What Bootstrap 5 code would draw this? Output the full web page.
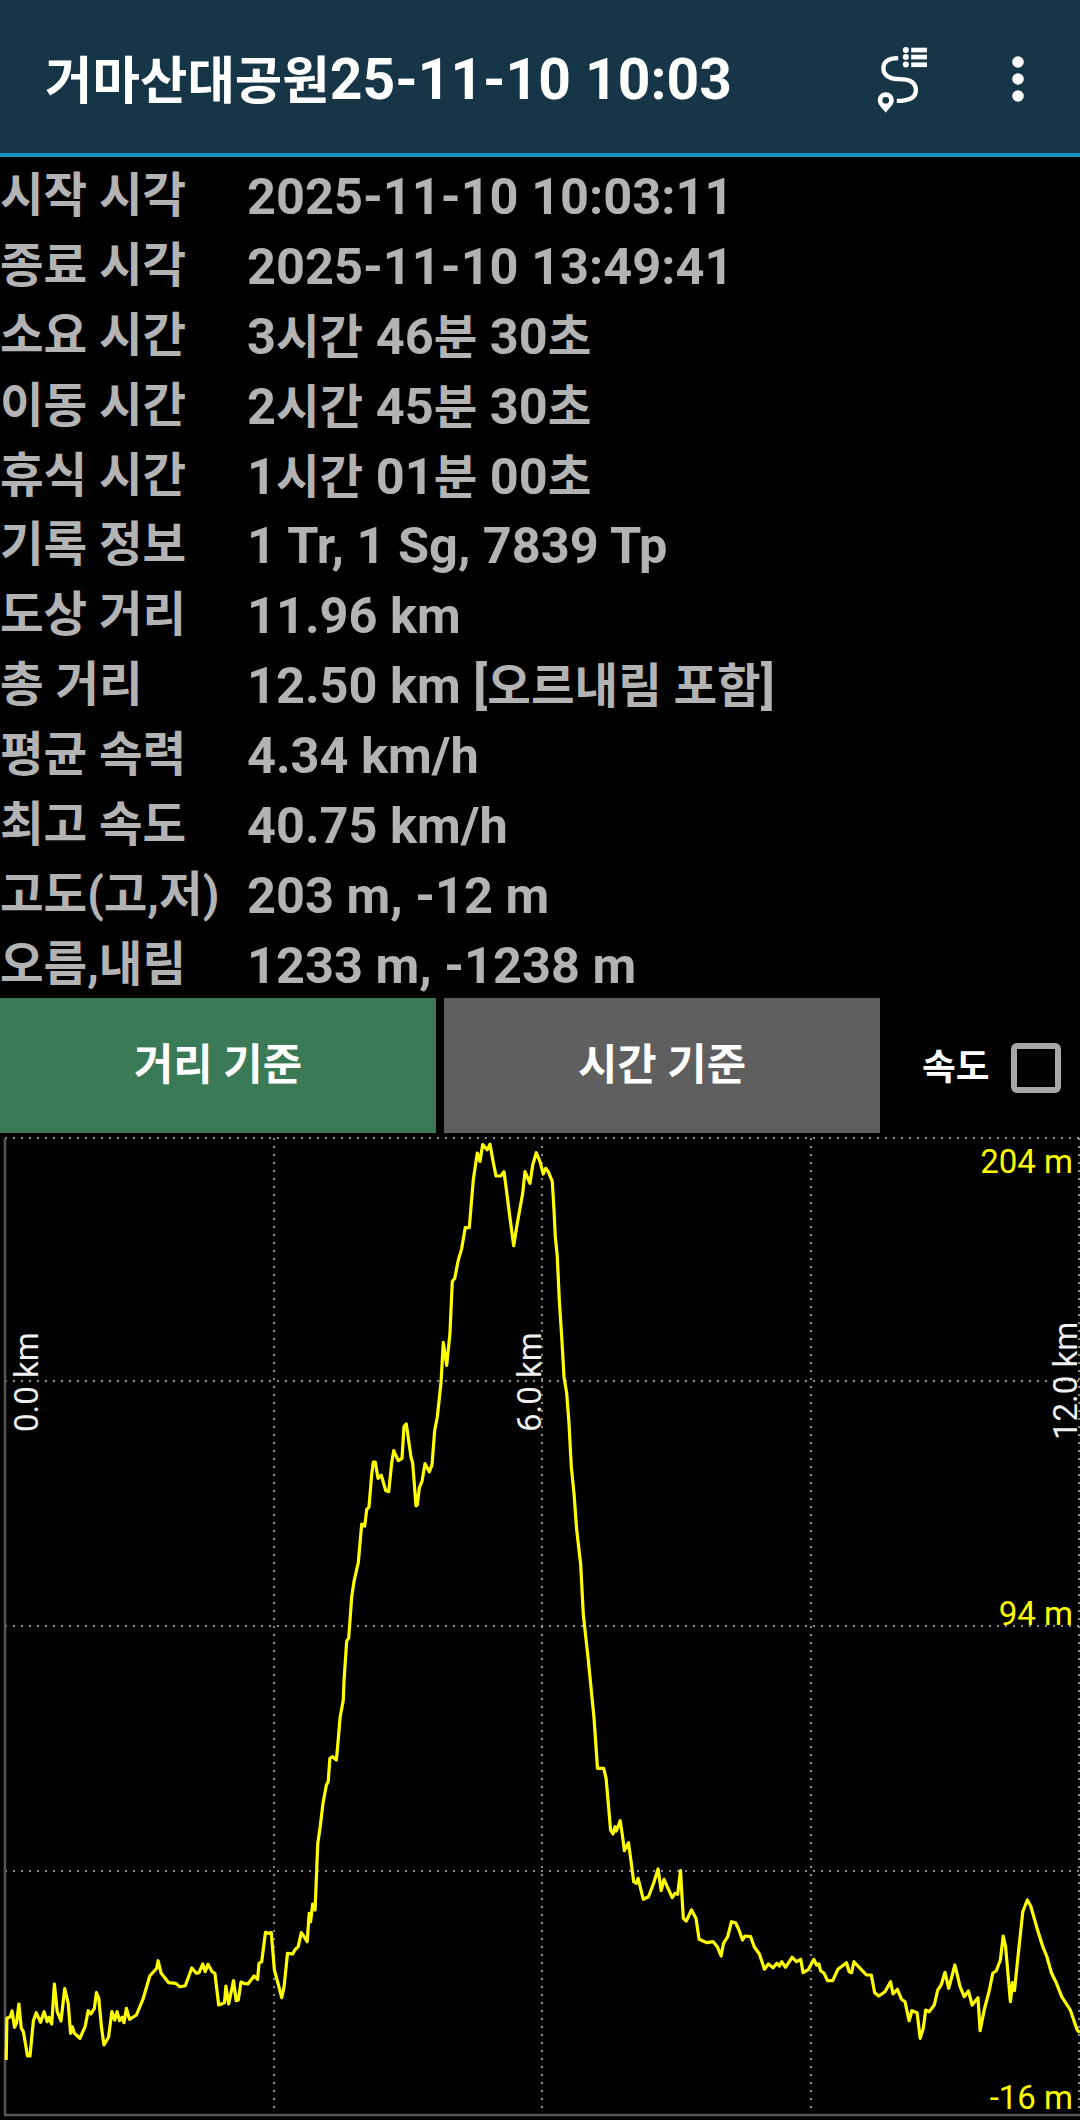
<!DOCTYPE html>
<html lang="ko">
<head>
  <meta charset="UTF-8" />
  <meta name="viewport" content="width=device-width, initial-scale=1.0"/>
  <title>거마산대공원25-11-10 10:03</title>
  <link href="https://cdn.jsdelivr.net/npm/bootstrap@5.3.2/dist/css/bootstrap.min.css" rel="stylesheet" />
  <style>
    body {
      background: #000;
      font-family: Roboto, "Noto Sans CJK KR", sans-serif;
      margin: 0;
    }
    .app-bar {
      height: 157px;
      padding: 6px 0 0 45px;
      background: #163547;
      border-bottom: 4px solid #1a8fc2;
    }
    .app-title {
      color: #fff;
      font-size: 57px;
      font-weight: 700;
      white-space: nowrap;
    }
    .app-title .han { font-size: 51.6px; }
    .route-icon { width: 57px; height: 72px; margin-right: 75px; }
    .more-icon { width: 24px; height: 60px; margin-right: 50px; }
    .stat-list { height: 841px; padding-top: 5px; }
    .stat-row {
      height: 69.9px;
      line-height: 69.9px;
      color: #b3b3b3;
      font-size: 50.5px;
      font-weight: 700;
      white-space: nowrap;
    }
    .stat-label { width: 247px; font-size: 47.4px; }
    .han { font-size: 47.4px; }
    .mode-btn {
      width: 436px;
      height: 135px;
      border: 0;
      border-radius: 0;
      color: #fff;
      font-size: 42.8px;
      font-weight: 700;
    }
    .mode-btn:hover, .mode-btn:active { color: #fff; }
    .mode-dist, .mode-dist:hover { background: #3b7a57; }
    .mode-time, .mode-time:hover { background: #5f5f5f; }
    .speed-label { color: #fff; font-size: 36.7px; font-weight: 700; margin-left: 42px; }
    .speed-box {
      width: 50px;
      height: 50px;
      margin-left: 21px;
      border: 6px solid #a8a8a8;
      border-radius: 6px;
    }
    .chart-svg { display: block; width: 1080px; height: 987px; }
    .grid-line { stroke: #b8b8b8; stroke-width: 1.5; stroke-dasharray: 2 6; }
    .axis-line { stroke: #555; stroke-width: 2.5; }
    .elev-line { fill: none; stroke: #ff0; stroke-width: 3.2; stroke-linejoin: round; }
    .elev-label { fill: #ff0; font: 33px Roboto, sans-serif; text-anchor: end; }
    .dist-label { fill: #f0f0f0; font: 33px Roboto, sans-serif; }
  </style>
</head>
<body>
  <nav class="navbar app-bar d-flex align-items-center flex-nowrap">
    <div class="app-title flex-grow-1"><span class="han">거마산대공원</span>25-11-10 10:03</div>
    <svg class="route-icon" viewBox="100 70 170 215" fill="#fff">
      <path d="M172 112 C145 112 128 122 128 143 C128 165 150 175 175 175 C205 175 225 185 225 208 C225 230 205 240 168 240" fill="none" stroke="#fff" stroke-width="13"/>
      <path fill-rule="evenodd" d="M135 275 C125 262 111 252 111 238 A24 24 0 0 1 159 238 C159 252 145 262 135 275 Z M135 228 A10 10 0 1 0 135 248 A10 10 0 1 0 135 228 Z"/>
      <circle cx="195" cy="88" r="9"/><circle cx="195" cy="109" r="9"/><circle cx="195" cy="131" r="9"/>
      <rect x="211" y="81" width="47" height="14"/><rect x="211" y="102" width="47" height="14"/><rect x="211" y="125" width="47" height="14"/>
    </svg>
    <svg class="more-icon" viewBox="0 0 24 60" fill="#fff">
      <circle cx="12" cy="12" r="5.8"/><circle cx="12" cy="29" r="5.8"/><circle cx="12" cy="46" r="5.8"/>
    </svg>
  </nav>

  <div class="stat-list">
    <div class="stat-row d-flex"><div class="stat-label">시작 시각</div><div>2025-11-10 10:03:11</div></div>
    <div class="stat-row d-flex"><div class="stat-label">종료 시각</div><div>2025-11-10 13:49:41</div></div>
    <div class="stat-row d-flex"><div class="stat-label">소요 시간</div><div>3<span class="han">시간</span> 46<span class="han">분</span> 30<span class="han">초</span></div></div>
    <div class="stat-row d-flex"><div class="stat-label">이동 시간</div><div>2<span class="han">시간</span> 45<span class="han">분</span> 30<span class="han">초</span></div></div>
    <div class="stat-row d-flex"><div class="stat-label">휴식 시간</div><div>1<span class="han">시간</span> 01<span class="han">분</span> 00<span class="han">초</span></div></div>
    <div class="stat-row d-flex"><div class="stat-label">기록 정보</div><div>1 Tr, 1 Sg, 7839 Tp</div></div>
    <div class="stat-row d-flex"><div class="stat-label">도상 거리</div><div>11.96 km</div></div>
    <div class="stat-row d-flex"><div class="stat-label">총 거리</div><div>12.50 km [<span class="han">오르내림 포함</span>]</div></div>
    <div class="stat-row d-flex"><div class="stat-label">평균 속력</div><div>4.34 km/h</div></div>
    <div class="stat-row d-flex"><div class="stat-label">최고 속도</div><div>40.75 km/h</div></div>
    <div class="stat-row d-flex"><div class="stat-label">고도(고,저)</div><div>203 m, -12 m</div></div>
    <div class="stat-row d-flex"><div class="stat-label">오름,내림</div><div>1233 m, -1238 m</div></div>
  </div>

  <div class="d-flex align-items-center">
    <button type="button" class="btn mode-btn mode-dist">거리 기준</button>
    <button type="button" class="btn mode-btn mode-time ms-2">시간 기준</button>
    <span class="speed-label mt-1">속도</span>
    <span class="speed-box mt-1"></span>
  </div>

  <svg class="chart-svg" viewBox="0 1133 1080 987">
    <g id="gridLines"></g>
    <line class="axis-line" x1="5" y1="1138" x2="5" y2="2115"/>
    <line class="axis-line" x1="4" y1="2115" x2="1080" y2="2115"/>
    <polyline id="elevLine" class="elev-line"/>
    <text class="elev-label" x="1073" y="1173">204 m</text>
    <text class="elev-label" x="1073" y="1625">94 m</text>
    <text class="elev-label" x="1073" y="2109">-16 m</text>
    <text class="dist-label" transform="translate(38 1432) rotate(-90)">0.0 km</text>
    <text class="dist-label" transform="translate(541 1432) rotate(-90)">6.0 km</text>
    <text class="dist-label" transform="translate(1077 1440) rotate(-90)">12.0 km</text>
  </svg>

  <script>
    // 격자선
    const grid = document.getElementById("gridLines");
    let gridHtml = "";
    [1138, 1381, 1626, 1871].forEach((y) => {
      gridHtml += `<line class="grid-line" x1="5" y1="${y}" x2="1080" y2="${y}"/>`;
    });
    [274, 542, 811, 1079].forEach((x) => {
      gridHtml += `<line class="grid-line" x1="${x}" y1="1138" x2="${x}" y2="2115"/>`;
    });
    grid.innerHTML = gridHtml;

    // 고도 그래프: [x 배율, y 배율, x 시작, y 시작, 점들]
    const parts = [
      [2.904, 3, 0, 1700, [18,1080,20,955,30,950,35,933,42,982,48,970,55,912,62,985,68,995,80,1068,87,1068,97,962,105,938,118,967,128,935,137,965,142,952,150,972,158,852,166,935,177,963,188,866,198,910,205,1000,210,980,216,1000,232,1015,247,980,256,932,264,942,274,925,280,878,287,895,295,985,302,1035,315,1012,325,935,333,960,340,935,347,962,355,952,360,968,367,925,376,958,396,945,416,895,435,828,455,805,459,782,468,820,490,848,510,850,522,860,538,857,557,804,570,820,578,818,589,792,596,815,604,793,616,815,624,820,635,915,652,908,656,858,664,912,678,842,686,902,692,900,700,846,708,850,720,852,738,828,748,838,752,790,760,785,771,697,778,700,788,698,797,810,810,860,818,893,825,860,835,760,850,762,856,750,866,740,875,698,882,708,892,725,898,640,902,665,908,612,915,630,920,500,923,430,930,380,938,310,948,255,953,245,958,175,966,170,977,180,982,120,988,50,997,0]],
      [3, 2.613, 240, 1130, [312,1440,320,1335,326,1328,335,1220,342,1180,355,1130,365,1030,374,1035,380,992,387,985,395,900,400,868,406,868,414,910,424,902,437,942,446,945,455,870,461,838,475,864,486,858,492,775,499,768,513,855,518,870,528,982,532,980,538,935,546,918,555,872,568,893,576,875,584,785,592,750,603,660,610,555,620,615,630,530,637,395,644,388,655,340,665,310,676,255,688,255,700,130,712,60,720,82,728,38,742,52,750,37,760,85,768,120]],
      [3, 3, 400, 1130, [302,138,312,125,322,200,330,265,341,347,352,280,360,235,368,190,375,125,390,160,398,105,409,68,420,95,430,132,437,115,445,125,457,155,462,240,466,320,472,380,478,510,485,620,492,740,500,790,507,880,514,1010,522,1090,530,1200]],
      [3, 2.613, 520, 1400, [182,430,190,560,205,680,222,830]],
      [2.904, 3, 540, 1700, [167,205,185,205,192,235,205,390,212,402,218,380,222,393,233,362,240,410,245,452,257,428,265,490,272,545,280,550,285,535,300,598,315,590,330,550,343,507,352,572,360,538,384,593,392,580,400,583,408,512,416,655,425,663,440,630,453,655,462,718,485,728,503,725,515,740,526,768,533,730,545,710,556,665,568,668,578,690,588,720,595,708,612,710,622,740,637,762,652,808,663,792,677,803,688,790,695,798,702,785,713,802,732,772,745,785,757,778,764,818,780,808,795,778,803,795,810,792,815,812,825,820,835,842,850,842,865,808,890,788,898,815,905,818,912,785,925,800,948,825,962,825,972,878,984,888,1002,875,1018,845,1025,882,1038,868,1050,898,1060,905,1072,962,1080,932,1095,938,1104,1015,1113,985,1120,930,1130,935,1145,915,1155,870,1165,855,1176,817,1187,865,1205,795,1220,860,1232,890,1244,873,1255,915,1272,893,1278,992,1290,930,1305,870,1315,820,1325,812,1337,780,1345,708,1352,740,1366,905,1372,848,1378,872,1388,770,1402,635,1415,600,1425,618,1445,690,1460,740,1472,770,1485,818,1500,850,1515,890,1540,930,1560,990,1568,998]]
    ];
    const pts = [];
    parts.forEach(([sx, sy, ox, oy, arr]) => {
      for (let i = 0; i < arr.length; i += 2) {
        pts.push((ox + arr[i] / sx).toFixed(1) + "," + (oy + arr[i + 1] / sy).toFixed(1));
      }
    });
    document.getElementById("elevLine").setAttribute("points", pts.join(" "));
  </script>
  <script src="https://cdn.jsdelivr.net/npm/bootstrap@5.3.2/dist/js/bootstrap.bundle.min.js"></script>
</body>
</html>
